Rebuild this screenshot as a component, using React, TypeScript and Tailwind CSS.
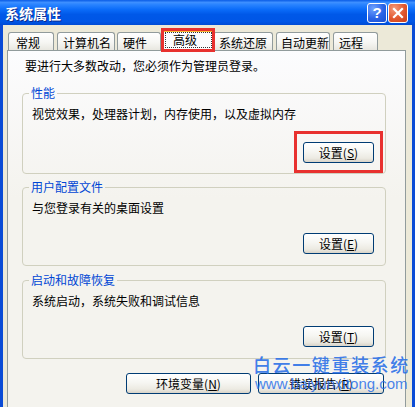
import React from "react";

type Tab = { label: string; cls: string; active?: boolean };

const tabs: Tab[] = [
  { label: "常规", cls: "w-[46px] pl-[7px]" },
  { label: "计算机名", cls: "ml-[3px] w-[58px] pl-[5px]" },
  { label: "硬件", cls: "ml-[2px] w-[44px] pl-[5px]" },
  { label: "高级", cls: "ml-[2px] w-[50px]", active: true },
  { label: "系统还原", cls: "w-[60px] pl-[5px]" },
  { label: "自动更新", cls: "ml-[3px] w-[54px] pl-[4px]" },
  { label: "远程", cls: "ml-[3px] w-[45px] pl-[5px]" },
];

function XpButton({
  label,
  hotkey,
  className,
  children,
}: {
  label: string;
  hotkey: string;
  className: string;
  children?: React.ReactNode;
}) {
  return (
    <div
      className={`relative h-[21px] rounded-[3px] border border-[#003C74] bg-[linear-gradient(#FFFFFF,#F6F6F2_45%,#ECEAE2_80%,#D8D3C8)] flex items-center justify-center text-[12px] leading-[14px] text-black ${className}`}
    >
      <span>
        {label}(<span className="underline underline-offset-1">{hotkey}</span>)
      </span>
      {children}
    </div>
  );
}

function Group({
  title,
  text,
  hotkey,
  btnGap,
  bottomPad,
  className,
  highlight,
}: {
  title: string;
  text: string;
  hotkey: string;
  btnGap: string;
  bottomPad: string;
  className: string;
  highlight?: boolean;
}) {
  return (
    <fieldset
      className={`w-[364px] rounded-[4px] border border-[#D0D0BF] px-[6px] ${bottomPad} ${className}`}
    >
      <legend className="px-[2px] leading-[14px] text-[#0046D5]">{title}</legend>
      <p className="mt-[7px] pl-[3px] leading-[14px]">{text}</p>
      <div className={`flex justify-end pr-[5px] ${btnGap}`}>
        <XpButton label="设置" hotkey={hotkey} className="w-[71px]">
          {highlight && (
            <div className="pointer-events-none absolute -left-[10px] -right-[10px] -top-[12px] -bottom-[11px] border-[3px] border-[#E8312F]" />
          )}
        </XpButton>
      </div>
    </fieldset>
  );
}

export default function App() {
  return (
    <div className="relative w-[415px] h-[407px] overflow-hidden flex flex-col bg-[#0A4BD6] font-['Noto_Sans_CJK_SC','Noto_Sans',sans-serif] text-[12px] text-black">
      {/* caption bar */}
      <div className="h-[25px] shrink-0 flex items-center justify-between pl-[5px] pr-[7px] bg-[linear-gradient(to_bottom,#0A5CE6_0%,#3D8FFF_10%,#2A84FF_18%,#0B6CF9_38%,#0058E8_58%,#0056E6_86%,#004BD4_100%)]">
        <span className="text-[14px] font-bold leading-[16px] text-white [text-shadow:1px_1px_0_#0B2A8C]">
          系统属性
        </span>
        <div className="flex gap-[1px]">
          <div className="w-[20px] h-[20px] rounded-[3px] border border-white bg-[radial-gradient(circle_at_30%_25%,#6FA2FF,#2A63E6_55%,#1A4FD0)] flex items-center justify-center">
            <span className="text-[15px] font-bold leading-none text-white font-['Liberation_Sans',sans-serif]">
              ?
            </span>
          </div>
          <div className="w-[20px] h-[20px] rounded-[3px] border border-white bg-[radial-gradient(circle_at_30%_25%,#F49A7A,#E2572E_55%,#C8401C)] flex items-center justify-center">
            <svg width="12" height="12" viewBox="0 0 12 12">
              <path d="M2 2 L10 10 M10 2 L2 10" stroke="#fff" strokeWidth="2.2" strokeLinecap="square" />
            </svg>
          </div>
        </div>
      </div>

      {/* dialog body */}
      <div className="flex-1 min-h-0 overflow-hidden border-x-[3px] border-[#0A4BD6] bg-[#ECE9D8] pl-[4px] pt-[5px]">
        {/* tab strip */}
        <div className="flex items-end h-[20px] pl-[1px]">
          {tabs.map((t) =>
            t.active ? (
              <div
                key={t.label}
                className={`relative z-10 -mb-px h-[21px] flex flex-col rounded-t-[3px] border-x border-[#919B9C] bg-[#FCFCFE] ${t.cls}`}
              >
                <div className="-mx-px h-[2px] rounded-t-[3px] bg-[linear-gradient(#E68B2C,#FFC73C)]" />
                <div className="ml-[1px] mr-[0px] h-[16px] border border-dotted border-[#333] pl-[7px] leading-[14px]">
                  {t.label}
                </div>
                <div className="pointer-events-none absolute -left-[3px] -right-[3px] -top-[2px] -bottom-[1px] border-[3px] border-[#E8312F]" />
              </div>
            ) : (
              <div
                key={t.label}
                className={`h-[18px] rounded-t-[3px] border border-b-0 border-[#919B9C] bg-[linear-gradient(#FFFFFF,#F6F6F3_55%,#E8E7E0)] pt-[3px] leading-[14px] ${t.cls}`}
              >
                {t.label}
              </div>
            )
          )}
        </div>

        {/* tab page */}
        <div className="w-[399px] h-[370px] shrink-0 border border-[#919B9C] bg-[linear-gradient(#FCFCFE,#F4F3EE_40%,#F4F3EE)] pt-[8px] pl-[14px]">
          <p className="pl-[3px] leading-[14px]">要进行大多数改动，您必须作为管理员登录。</p>

          <Group
            title="性能"
            text="视觉效果，处理器计划，内存使用，以及虚拟内存"
            hotkey="S"
            btnGap="mt-[21px]"
            bottomPad="pb-[10px]"
            className="mt-[13px]"
            highlight
          />
          <Group
            title="用户配置文件"
            text="与您登录有关的桌面设置"
            hotkey="E"
            btnGap="mt-[18px]"
            bottomPad="pb-[11px]"
            className="mt-[6px]"
          />
          <Group
            title="启动和故障恢复"
            text="系统启动，系统失败和调试信息"
            hotkey="T"
            btnGap="mt-[18px]"
            bottomPad="pb-[11px]"
            className="mt-[7px]"
          />

          <div className="mt-[14px] w-[364px] flex justify-end gap-[7px] pr-[2px]">
            <XpButton label="环境变量" hotkey="N" className="w-[125px]" />
            <XpButton label="错误报告" hotkey="R" className="w-[126px]" />
          </div>
        </div>
      </div>

      {/* site watermark laid over the dialog */}
      <div className="pointer-events-none absolute left-[253px] top-[353px] flex flex-col">
        <span className="text-[18px] font-medium leading-[22px] tracking-[1.6px] text-[rgba(40,110,232,0.9)]">
          白云一键重装系统
        </span>
        <span className="ml-[2px] font-['Liberation_Sans',sans-serif] text-[15px] leading-[17px] text-[rgba(40,110,232,0.85)]">
          www.baiyunxitong.com
        </span>
      </div>
    </div>
  );
}
